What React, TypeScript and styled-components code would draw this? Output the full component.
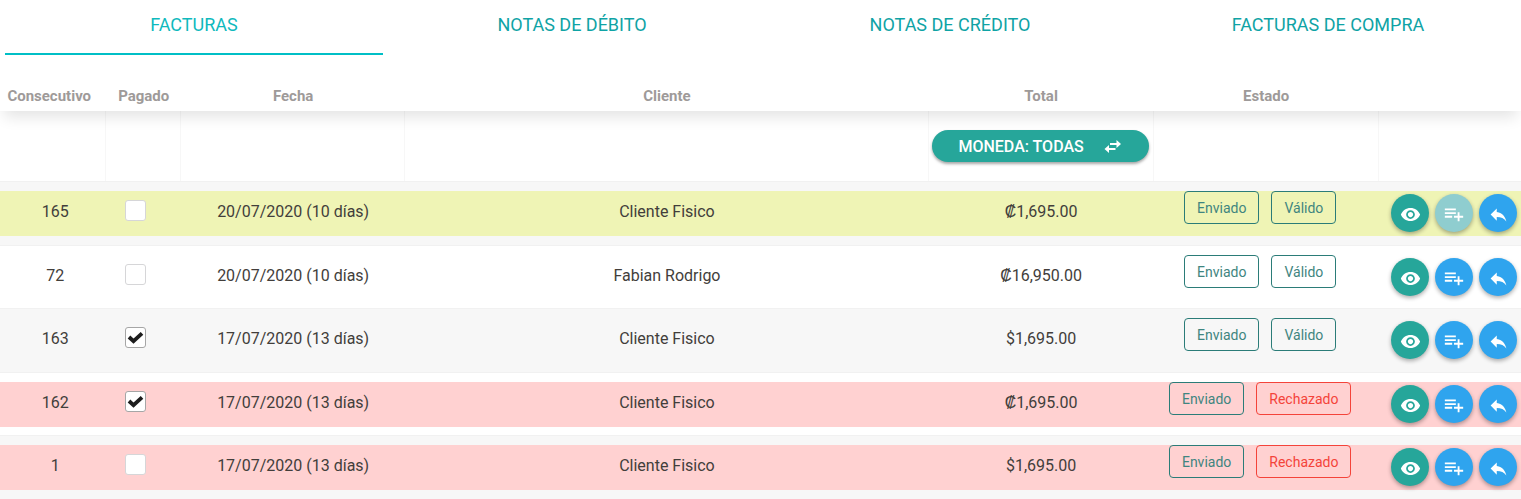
import React, { useState } from 'react';
import styled, { createGlobalStyle, css } from 'styled-components';
import { MdRemoveRedEye, MdReply } from 'react-icons/md';

const GlobalStyle = createGlobalStyle`
  *, *::before, *::after { box-sizing: border-box; }
  body {
    margin: 0;
    background: #fff;
    color: #423e3b;
    font-family: Roboto, 'Liberation Sans', sans-serif;
    font-size: 16px;
    overflow-x: hidden;
  }
  button { font-family: inherit; cursor: pointer; }
`;

const Tabs = styled.nav`
  display: grid;
  grid-template-columns: repeat(4, 1fr);
  padding: 0 4px 0 5px;
`;

const Tab = styled.a<{ $active?: boolean }>`
  height: 55px;
  padding-top: 13px;
  border-bottom: 2px solid ${(p) => (p.$active ? '#00bfc6' : 'transparent')};
  color: ${(p) => (p.$active ? '#0fb9bd' : '#0fa3a5')};
  font-size: 18px;
  line-height: 24px;
  text-align: center;
  text-decoration: none;
`;

const Table = styled.table`
  width: 100%;
  table-layout: fixed;
  border-spacing: 0;
`;

const Col = styled.col<{ $width?: string }>`
  width: ${(p) => p.$width ?? 'auto'};
`;

const Head = styled.thead`
  position: relative;
  box-shadow: 0 10px 14px -4px rgba(0, 0, 0, 0.11);
`;

const HeadCell = styled.th`
  height: 56px;
  padding: 31px 0 5px;
  background: #fff;
  color: #9e9a99;
  font-size: 15px;
  font-weight: 700;
  line-height: 20px;
  text-align: center;
  &:first-child { padding-right: 8px; }
`;

const FilterCell = styled.td`
  height: 70px;
  padding: 0 4px 0 3px;
  border-right: 1px solid #f7f7f7;
  &:last-child { border-right: 0; }
`;

const CurrencyButton = styled.button`
  display: flex;
  align-items: center;
  justify-content: center;
  gap: 20px;
  width: 100%;
  height: 32px;
  border: 0;
  border-radius: 16px;
  background: #26a69a;
  color: #fff;
  font-size: 16px;
  font-weight: 500;
  box-shadow: 0 2px 3px rgba(0, 0, 0, 0.35);
`;

const Row = styled.tr`
  background: #f7f7f7;
  &:nth-child(even) { background: #fff; }
  &:nth-child(even) > td { padding-bottom: 8px; }
`;

const Cell = styled.td`
  padding: 9px 0;
  border-top: 1px solid #f1f1f1;
`;

type Tone = 'none' | 'warn' | 'error';
const tones: Record<Tone, string> = { none: 'transparent', warn: '#eff4b5', error: '#ffd1d1' };

const Band = styled.div<{ $tone: Tone }>`
  height: 45px;
  background: ${(p) => tones[p.$tone]};
  line-height: 41px;
  text-align: center;
`;

const CheckBand = styled(Band)`
  display: flex;
  justify-content: center;
  padding: 9px 16px 0 0;
`;

const StatusBand = styled(Band)`
  display: flex;
  justify-content: center;
  gap: 12px;
  padding-right: 12px;
`;

const ActionBand = styled(Band)`
  display: flex;
  justify-content: flex-end;
  gap: 6px;
  padding: 3px 4px 0 0;
`;

const IdBand = styled(Band)`
  padding-left: 4px;
`;

const Check = styled.span`
  display: grid;
  width: 21px;
  height: 21px;
  > * { grid-area: 1 / 1; }
  svg { display: none; width: 21px; height: 21px; pointer-events: none; }
  input:checked + svg { display: block; }
`;

const CheckInput = styled.input`
  appearance: none;
  width: 21px;
  height: 21px;
  margin: 0;
  border: 1px solid #d6d6d8;
  border-radius: 3px;
  background: #fff;
  &:checked { border-color: #a6a6a6; }
`;

const Badge = styled.button<{ $bad?: boolean }>`
  height: 33px;
  padding: 0 12px;
  border: 1px solid;
  border-radius: 4px;
  background: transparent;
  font-size: 14px;
  line-height: 20px;
  ${(p) => (p.$bad
    ? css`color: #f4433a; border-color: #f4433a;`
    : css`color: #3f8580; border-color: #2b7c78;`)}
`;

const RoundButton = styled.button<{ $color: string }>`
  display: flex;
  align-items: center;
  justify-content: center;
  width: 38px;
  height: 38px;
  flex: none;
  padding: 2px 0 0;
  border: 0;
  border-radius: 50%;
  background: ${(p) => p.$color};
  color: #fff;
  box-shadow: 0 2px 4px rgba(0, 0, 0, 0.32);
`;

type Invoice = {
  id: number; paid: boolean; date: string; client: string; total: string;
  valid: boolean; tone: Tone; locked?: boolean;
};

const invoices: Invoice[] = [
  { id: 165, paid: false, date: '20/07/2020 (10 días)', client: 'Cliente Fisico', total: '₡1,695.00', valid: true, tone: 'warn', locked: true },
  { id: 72, paid: false, date: '20/07/2020 (10 días)', client: 'Fabian Rodrigo', total: '₡16,950.00', valid: true, tone: 'none' },
  { id: 163, paid: true, date: '17/07/2020 (13 días)', client: 'Cliente Fisico', total: '$1,695.00', valid: true, tone: 'none' },
  { id: 162, paid: true, date: '17/07/2020 (13 días)', client: 'Cliente Fisico', total: '₡1,695.00', valid: false, tone: 'error' },
  { id: 1, paid: false, date: '17/07/2020 (13 días)', client: 'Cliente Fisico', total: '$1,695.00', valid: false, tone: 'error' },
];

const SwapIcon = () => (
  <svg width="18" height="14" viewBox="0 0 18 14" fill="currentColor" aria-hidden="true">
    <path d="M12.500 1 17 5 12.500 9V6H6V4h6.500zM5 6v3h6.500v2H5v3L0.500 10z" />
  </svg>
);

const ListAddIcon = () => (
  <svg width="22" height="22" viewBox="0 0 24 24" fill="currentColor" aria-hidden="true">
    <path d="M14 10H2v2h12v-2zm0-4H2v2h12V6zm4 8v-4h-2v4h-4v2h4v4h2v-4h4v-2h-4zM2 16h8v-2H2v2z" />
  </svg>
);

function InvoiceRow({ item }: { item: Invoice }) {
  const [paid, setPaid] = useState(item.paid);
  return (
    <Row>
      <Cell><IdBand $tone={item.tone}>{item.id}</IdBand></Cell>
      <Cell>
        <CheckBand $tone={item.tone}>
          <Check>
            <CheckInput
              type="checkbox"
              aria-label={`Pagado ${item.id}`}
              checked={paid}
              onChange={(e) => setPaid(e.target.checked)}
            />
            <svg viewBox="0 0 21 21" aria-hidden="true">
              <path d="M4 10 8.500 14.200 17 6.300" fill="none" stroke="#1d1d1d" strokeWidth="3.800" />
            </svg>
          </Check>
        </CheckBand>
      </Cell>
      <Cell><Band $tone={item.tone}>{item.date}</Band></Cell>
      <Cell><Band $tone={item.tone}>{item.client}</Band></Cell>
      <Cell><Band $tone={item.tone}>{item.total}</Band></Cell>
      <Cell>
        <StatusBand $tone={item.tone}>
          <Badge type="button">Enviado</Badge>
          <Badge type="button" $bad={!item.valid}>{item.valid ? 'Válido' : 'Rechazado'}</Badge>
        </StatusBand>
      </Cell>
      <Cell>
        <ActionBand $tone={item.tone}>
          <RoundButton type="button" $color="#26a69a" aria-label="Ver"><MdRemoveRedEye size={21} /></RoundButton>
          <RoundButton type="button" $color={item.locked ? '#8fcdcf' : '#2fa4ee'} aria-label="Agregar nota"><ListAddIcon /></RoundButton>
          <RoundButton type="button" $color="#2fa4ee" aria-label="Responder"><MdReply size={21} /></RoundButton>
        </ActionBand>
      </Cell>
    </Row>
  );
}

export default function App() {
  return (
    <>
      <GlobalStyle />
      <Tabs>
        <Tab href="#facturas" $active>FACTURAS</Tab>
        <Tab href="#debito">NOTAS DE DÉBITO</Tab>
        <Tab href="#credito">NOTAS DE CRÉDITO</Tab>
        <Tab href="#compra">FACTURAS DE COMPRA</Tab>
      </Tabs>
      <Table>
        <colgroup>
          <Col $width="7%" />
          <Col $width="4.900%" />
          <Col $width="14.750%" />
          <Col $width="34.400%" />
          <Col $width="14.800%" />
          <Col $width="14.800%" />
          <Col />
        </colgroup>
        <Head>
          <tr>
            <HeadCell scope="col">Consecutivo</HeadCell>
            <HeadCell scope="col">Pagado</HeadCell>
            <HeadCell scope="col">Fecha</HeadCell>
            <HeadCell scope="col">Cliente</HeadCell>
            <HeadCell scope="col">Total</HeadCell>
            <HeadCell scope="col">Estado</HeadCell>
            <HeadCell scope="col" aria-label="Acciones" />
          </tr>
        </Head>
        <tbody>
          <tr>
            <FilterCell />
            <FilterCell />
            <FilterCell />
            <FilterCell />
            <FilterCell>
              <CurrencyButton type="button">MONEDA: TODAS <SwapIcon /></CurrencyButton>
            </FilterCell>
            <FilterCell />
            <FilterCell />
          </tr>
        </tbody>
        <tbody>
          {invoices.map((item) => <InvoiceRow key={item.id} item={item} />)}
        </tbody>
      </Table>
    </>
  );
}
